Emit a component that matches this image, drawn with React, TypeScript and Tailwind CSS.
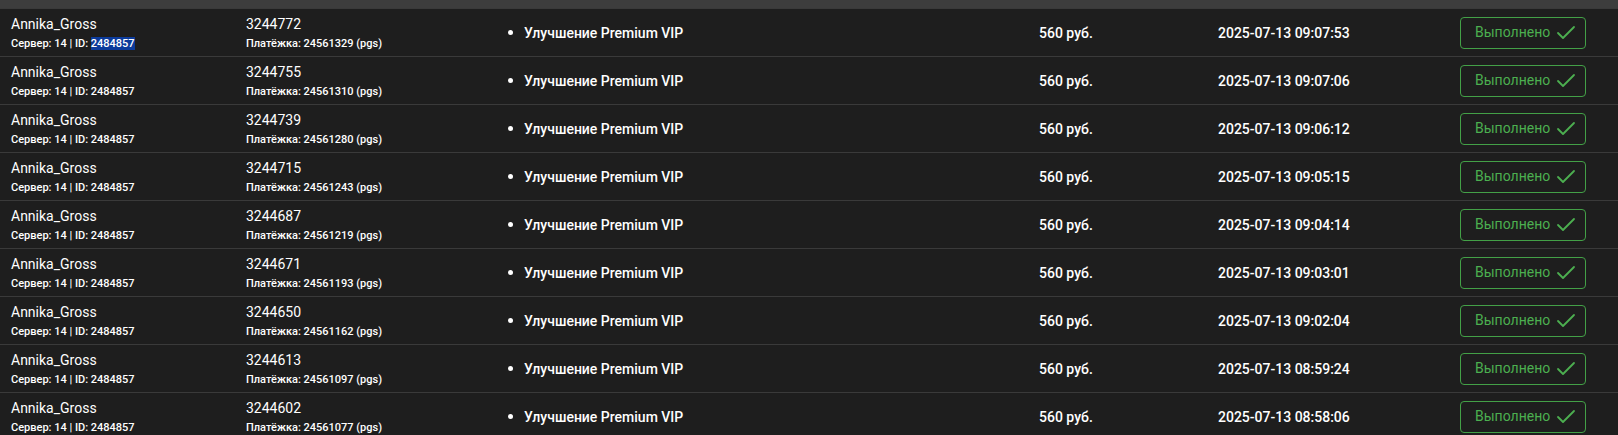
import { Check } from "lucide-react";

type Payment = {
  id: string;
  bill: string;
  time: string;
};

const payments: Payment[] = [
  { id: "3244772", bill: "24561329", time: "2025-07-13 09:07:53" },
  { id: "3244755", bill: "24561310", time: "2025-07-13 09:07:06" },
  { id: "3244739", bill: "24561280", time: "2025-07-13 09:06:12" },
  { id: "3244715", bill: "24561243", time: "2025-07-13 09:05:15" },
  { id: "3244687", bill: "24561219", time: "2025-07-13 09:04:14" },
  { id: "3244671", bill: "24561193", time: "2025-07-13 09:03:01" },
  { id: "3244650", bill: "24561162", time: "2025-07-13 09:02:04" },
  { id: "3244613", bill: "24561097", time: "2025-07-13 08:59:24" },
  { id: "3244602", bill: "24561077", time: "2025-07-13 08:58:06" },
];

function Row({ item, selected }: { item: Payment; selected?: boolean }) {
  return (
    <div className="grid h-[48px] grid-cols-[235px_262px_531px_179px_242px_126px] items-center border-t border-[#3a3a3a] pl-[11px] pr-[32px]">
      {/* игрок */}
      <div className="flex flex-col self-start pt-[5px]">
        <span className="text-[14px] leading-[20px]">Annika_Gross</span>
        <span className="mt-[2px] text-[11px] leading-[16px] font-medium">
          Сервер: 14 | ID:{" "}
          <span className={selected ? "bg-[#0c3b9b]" : ""}>2484857</span>
        </span>
      </div>

      {/* заказ */}
      <div className="flex flex-col self-start pt-[5px]">
        <span className="text-[14px] leading-[20px]">{item.id}</span>
        <span className="mt-[2px] text-[11px] leading-[16px] font-medium">
          Платёжка: {item.bill} (pgs)
        </span>
      </div>

      <div className="flex items-center gap-[11px]">
        <span className="h-[5px] w-[5px] rounded-full bg-white" />
        <span className="text-[14px] leading-[20px] font-medium">
          Улучшение Premium VIP
        </span>
      </div>

      <div className="text-[14px] leading-[20px] font-medium">560 руб.</div>

      <div className="text-[14px] leading-[20px] font-medium">{item.time}</div>

      <div>
        <button className="flex h-[32px] w-[126px] items-center justify-between rounded-[4px] border border-[#43a047] pr-[7px] pl-[14px] text-[14px] text-[#4caf50]">
          Выполнено
          <Check size={24} strokeWidth={1.8} />
        </button>
      </div>
    </div>
  );
}

export default function App() {
  return (
    <div className="h-[435px] overflow-hidden bg-[#1e1e1e] font-['Roboto',sans-serif] text-white">
      <div className="h-[8px] bg-[#3d3d3d]" />
      {payments.map((item, i) => (
        <Row key={item.id} item={item} selected={i === 0} />
      ))}
    </div>
  );
}
